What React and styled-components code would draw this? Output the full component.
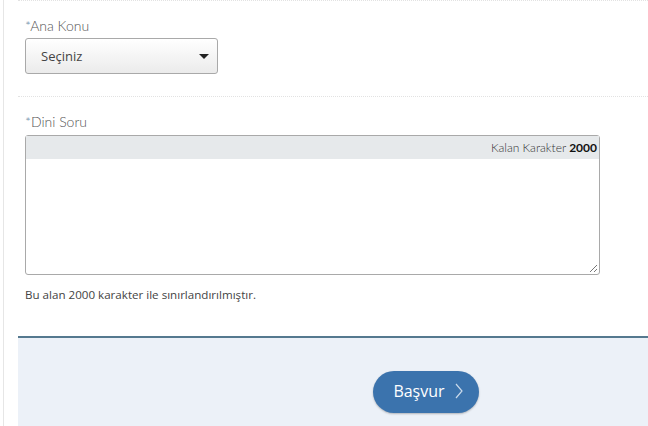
import React from 'react';
import styled, {createGlobalStyle} from 'styled-components';

const GlobalStyle = createGlobalStyle`
    html, body {
        margin: 0;
        padding: 0;
        background: #fff;
        font-family: Lato, "Open Sans", sans-serif;
        color: #333;
    }
`;

const Frame = styled.div`
    margin-left: 3px;
    border-left: 1px solid #e6e6e6;
    padding-left: 14px;
    height: 426px;
    box-sizing: border-box;
    display: flex;
    flex-direction: column;
    overflow: hidden;
`;

const Section = styled.div`
    border-top: 1px dotted #e2e2e2;
    padding: ${props => props.pad || '16px 0 22px 7px'};
`;

const Label = styled.div`
    font-size: 14px;
    line-height: 17px;
    color: #555;
    font-weight: 300;
    margin-bottom: 4px;
    span {
        color: #6c8aa6;
    }
`;

const Select = styled.div`
    width: 193px;
    height: 36px;
    box-sizing: border-box;
    border: 1px solid #a9a9a9;
    border-radius: 3px;
    background: linear-gradient(#ffffff, #ebebeb);
    display: flex;
    align-items: center;
    justify-content: space-between;
    padding: 0 7px 0 15px;
    font-family: "Open Sans", Lato, sans-serif;
    font-size: 13px;
    color: #444;
`;

const Caret = styled.div`
    width: 0;
    height: 0;
    border-left: 5px solid transparent;
    border-right: 5px solid transparent;
    border-top: 5px solid #222;
    margin-right: 1px;
`;

const TextBox = styled.div`
    position: relative;
    width: 575px;
    height: 140px;
    box-sizing: border-box;
    border: 1px solid #a9a9a9;
    border-radius: 3px;
    background: #fff;
    display: flex;
    flex-direction: column;
    margin-top: 5px;
`;

const Counter = styled.div`
    height: 23px;
    background: #e6e9eb;
    font-size: 12px;
    font-weight: 300;
    color: #333;
    display: flex;
    justify-content: flex-end;
    align-items: center;
    padding-right: 2px;
    b {
        color: #111;
        font-weight: 700;
        margin-left: 3px;
    }
`;

const Grip = styled.svg`
    position: absolute;
    right: 1px;
    bottom: 1px;
`;

const Hint = styled.div`
    font-family: "Open Sans", Lato, sans-serif;
    font-size: 11.6px;
    color: #444;
    margin-top: 12px;
`;

const Panel = styled.div`
    flex: 1;
    border-top: 2px solid #55798f;
    background: #ecf1f8;
    padding: 33px 0 0 355px;
    margin-top: 34px;
`;

const Button = styled.button`
    width: 106px;
    height: 42px;
    border: none;
    border-radius: 21px;
    background: #3b73ad;
    color: #fff;
    font-family: "Open Sans", Lato, sans-serif;
    font-size: 16px;
    display: flex;
    align-items: center;
    justify-content: center;
    gap: 10px;
    padding: 0 0 2px 4px;
    box-shadow: 0 1px 2px rgba(0, 0, 0, 0.25);
    cursor: pointer;
`;

export default function App() {
    return (
        <Frame>
            <GlobalStyle />
            <Section>
                <Label><span>*</span>Ana Konu</Label>
                <Select>
                    Seçiniz
                    <Caret />
                </Select>
            </Section>
            <Section pad="16px 0 0 7px">
                <Label><span>*</span>Dini Soru</Label>
                <TextBox>
                    <Counter>Kalan Karakter <b>2000</b></Counter>
                    <Grip width="9" height="9" viewBox="0 0 9 9">
                        <path d="M8 1 L1 8 M8 5 L5 8" stroke="#777" strokeWidth="1" />
                    </Grip>
                </TextBox>
                <Hint>Bu alan 2000 karakter ile sınırlandırılmıştır.</Hint>
            </Section>
            <Panel>
                <Button>
                    Başvur
                    <svg width="8" height="16" viewBox="0 0 8 16">
                        <path d="M1 1 L7 8 L1 15" fill="none" stroke="#c9d9ea" strokeWidth="1.2" />
                    </svg>
                </Button>
            </Panel>
        </Frame>
    );
}
